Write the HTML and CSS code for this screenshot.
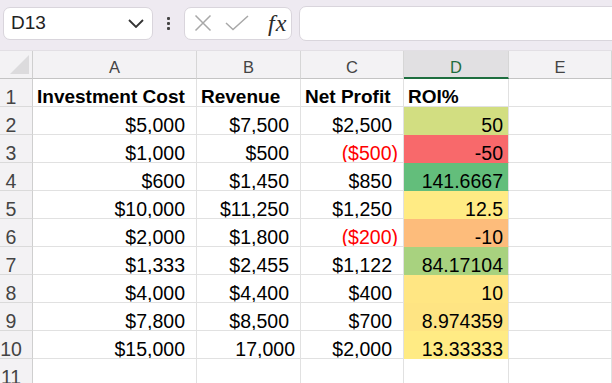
FILE: index.html
```html
<!DOCTYPE html>
<html lang="en">
<head>
  <meta charset="UTF-8" />
  <meta name="viewport" content="width=device-width, initial-scale=1.0" />
  <title>ROI Sheet</title>
  <link rel="stylesheet" href="styles.css">
</head>
<body>
  <div class="toolbar">
    <div class="name-box">
      <span>D13</span>
      <svg class="chevron" width="16" height="9" viewBox="0 0 16 9"><path d="M1 1 L8 8 L15 1" fill="none" stroke="#333" stroke-width="1.8"/></svg>
    </div>
    <div class="grip"><i></i><i></i><i></i></div>
    <div class="fx-box">
      <svg width="18" height="18" viewBox="0 0 18 18"><path d="M1.5 1.5 L16.5 16.5 M16.5 1.5 L1.5 16.5" stroke="#a8a8a8" stroke-width="1.5"/></svg>
      <svg width="24" height="16" viewBox="0 0 24 16"><path d="M1 8 L8 14.5 L23 1" fill="none" stroke="#a8a8a8" stroke-width="1.5"/></svg>
      <span class="fx">fx</span>
    </div>
    <div class="formula"></div>
  </div>

  <div class="sheet">
    <div class="corner"><span class="tri"></span></div>
    <div class="col-head">A</div>
    <div class="col-head">B</div>
    <div class="col-head">C</div>
    <div class="col-head selected">D</div>
    <div class="col-head">E</div>

    <div class="row-head">1</div>
    <div class="cell bold">Investment Cost</div>
    <div class="cell bold">Revenue</div>
    <div class="cell bold">Net Profit</div>
    <div class="cell bold">ROI%</div>
    <div class="cell"></div>

    <div class="row-head">2</div>
    <div class="cell cur">$5,000</div>
    <div class="cell cur">$7,500</div>
    <div class="cell cur">$2,500</div>
    <div class="cell num fill" style="background: #d2de81; border-bottom-color: #d2de81">50</div>
    <div class="cell"></div>

    <div class="row-head">3</div>
    <div class="cell cur">$1,000</div>
    <div class="cell cur">$500</div>
    <div class="cell num neg">($500)</div>
    <div class="cell num fill" style="background: #f8696b; border-bottom-color: #f8696b">-50</div>
    <div class="cell"></div>

    <div class="row-head">4</div>
    <div class="cell cur">$600</div>
    <div class="cell cur">$1,450</div>
    <div class="cell cur">$850</div>
    <div class="cell num fill" style="background: #63be7b; border-bottom-color: #63be7b">141.6667</div>
    <div class="cell"></div>

    <div class="row-head">5</div>
    <div class="cell cur">$10,000</div>
    <div class="cell cur">$11,250</div>
    <div class="cell cur">$1,250</div>
    <div class="cell num fill" style="background: #ffeb84; border-bottom-color: #ffeb84">12.5</div>
    <div class="cell"></div>

    <div class="row-head">6</div>
    <div class="cell cur">$2,000</div>
    <div class="cell cur">$1,800</div>
    <div class="cell num neg">($200)</div>
    <div class="cell num fill" style="background: #fdbc7b; border-bottom-color: #fdbc7b">-10</div>
    <div class="cell"></div>

    <div class="row-head">7</div>
    <div class="cell cur">$1,333</div>
    <div class="cell cur">$2,455</div>
    <div class="cell cur">$1,122</div>
    <div class="cell num fill" style="background: #a8d27f; border-bottom-color: #a8d27f">84.17104</div>
    <div class="cell"></div>

    <div class="row-head">8</div>
    <div class="cell cur">$4,000</div>
    <div class="cell cur">$4,400</div>
    <div class="cell cur">$400</div>
    <div class="cell num fill" style="background: #ffe683; border-bottom-color: #ffe683">10</div>
    <div class="cell"></div>

    <div class="row-head">9</div>
    <div class="cell cur">$7,800</div>
    <div class="cell cur">$8,500</div>
    <div class="cell cur">$700</div>
    <div class="cell num fill" style="background: #fee483; border-bottom-color: #fee483">8.974359</div>
    <div class="cell"></div>

    <div class="row-head">10</div>
    <div class="cell cur">$15,000</div>
    <div class="cell num">17,000</div>
    <div class="cell cur">$2,000</div>
    <div class="cell num fill" style="background: #ffeb84; border-bottom-color: #ffeb84">13.33333</div>
    <div class="cell"></div>

    <div class="row-head">11</div>
    <div class="cell"></div>
    <div class="cell"></div>
    <div class="cell"></div>
    <div class="cell"></div>
    <div class="cell"></div>
  </div>
</body>
</html>
```

FILE: styles.css
```css
body {
  margin: 0;
  font-family: 'Liberation Sans', Arial, sans-serif;
  background: #ffffff;
  overflow: hidden;
}
.toolbar {
  display: flex;
  align-items: center;
  height: 51px;
  padding: 0 0 4px 3px;
  box-sizing: border-box;
  background: #eeeaf1;
  border-bottom: 1px solid #e2dfe4;
}
.name-box {
  display: flex;
  align-items: center;
  justify-content: space-between;
  width: 150px;
  height: 33px;
  box-sizing: border-box;
  padding: 0 8px 0 7px;
  background: #ffffff;
  border: 1px solid #d9d5dc;
  border-radius: 7px;
  font-size: 19px;
  color: #222;
}
.grip {
  display: flex;
  flex-direction: column;
  gap: 2px;
  margin: 0 14px 0 14px;
}
.grip i {
  display: block;
  width: 3px;
  height: 3px;
  background: #444;
  border-radius: 1px;
}
.fx-box {
  display: flex;
  align-items: center;
  gap: 13px;
  width: 108px;
  height: 33px;
  box-sizing: border-box;
  padding: 0 0 0 9px;
  background: #ffffff;
  border: 1px solid #d9d5dc;
  border-radius: 7px;
}
.fx {
  font-family: 'Liberation Serif', 'DejaVu Serif', serif;
  font-style: italic;
  font-size: 24px;
  color: #2b2b2b;
  margin-left: 6px;
  letter-spacing: 1px;
}
.formula {
  flex: 1;
  height: 33px;
  margin-left: 7px;
  margin-right: -10px;
  background: #ffffff;
  border: 1px solid #d9d5dc;
  border-radius: 7px;
}
.sheet {
  display: grid;
  grid-template-columns: 33px 164px 104px 103px 105px 1fr;
  grid-auto-rows: 28px;
}
.sheet > div {
  box-sizing: border-box;
  border-right: 1px solid #e1e1e1;
  border-bottom: 1px solid #e1e1e1;
  white-space: nowrap;
  overflow: hidden;
}
.corner {
  position: relative;
  background: #f3f2f4;
  border-right-color: #cfcfcf !important;
  border-bottom-color: #c4c4c4 !important;
}
.tri {
  position: absolute;
  right: 3px;
  bottom: 4px;
  width: 0;
  height: 0;
  border-left: 19px solid transparent;
  border-bottom: 19px solid #dcdbdd;
}
.col-head {
  background: #f3f2f4;
  border-right-color: #d6d6d6 !important;
  border-bottom-color: #c4c4c4 !important;
  text-align: center;
  font-size: 16.5px;
  line-height: 20px;
  padding-top: 6px;
  color: #444;
}
.col-head.selected {
  background: #e1e0e2;
  color: #1e6e3f;
  border-bottom: 2px solid #1e6e3f !important;
}
.row-head {
  background: #f3f2f4;
  border-right-color: #cfcfcf !important;
  border-bottom-color: #dadada !important;
  text-align: center;
  padding-right: 10px;
  font-size: 19.5px;
  line-height: 20px;
  padding-top: 8px;
  color: #444;
}
.cell {
  font-size: 19.5px;
  line-height: 20px;
  padding: 8px 5px 0 4px;
  color: #000;
}
.cell.bold {
  font-weight: bold;
  font-size: 19px;
}
.cell.num {
  text-align: right;
}
.cell.cur {
  text-align: right;
  padding-right: 11px;
}
.cell.neg {
  color: #ff0000;
}
```
